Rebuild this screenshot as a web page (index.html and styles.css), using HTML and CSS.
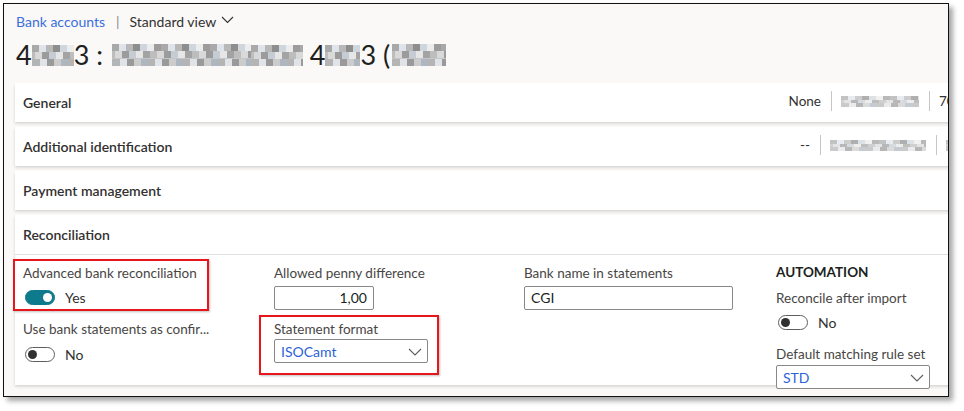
FILE: index.html
```html
<!DOCTYPE html>
<html lang="en">
<head>
<meta charset="utf-8">
<title>Bank accounts</title>
<link rel="stylesheet" href="styles.css">
</head>
<body>
<div class="frame">
  <header class="page-head">
    <nav class="crumbs">
      <a class="crumb-link" href="#">Bank accounts</a>
      <span class="crumb-sep">|</span>
      <span class="view">Standard view
        <svg class="view-chev" width="13" height="8" viewBox="0 0 13 8"><path d="M1 1 L6.5 6.5 L12 1" fill="none" stroke="#323130" stroke-width="1.1"/></svg>
      </span>
    </nav>
    <h1 class="title">4<span class="mosaic m1"></span>3 : <span class="mosaic m2"></span> <span class="mosaic m3"></span> 4<span class="mosaic m4"></span>3 (<span class="mosaic m5"></span></h1>
  </header>

  <section class="tabs">
    <div class="card">
      <div class="card-head">
        <span class="card-title">General</span>
        <span class="summary">
          <span class="sum-text">None</span>
          <span class="sum-sep"></span>
          <span class="mosaic sum-blur b1"></span>
          <span class="sum-sep"></span>
          <span class="sum-text sum-last">70</span>
        </span>
      </div>
    </div>
    <div class="card">
      <div class="card-head">
        <span class="card-title">Additional identification</span>
        <span class="summary">
          <span class="sum-text">--</span>
          <span class="sum-sep"></span>
          <span class="mosaic sum-blur b2"></span>
          <span class="sum-sep"></span>
          <span class="mosaic sum-blur b3"></span>
        </span>
      </div>
    </div>
    <div class="card">
      <div class="card-head">
        <span class="card-title">Payment management</span>
      </div>
    </div>
    <div class="card card-open">
      <div class="card-head">
        <span class="card-title">Reconciliation</span>
      </div>
      <div class="card-body">
        <div class="col">
          <div class="field marked">
            <span class="annot annot-1"></span>
            <div class="label">Advanced bank reconciliation</div>
            <div class="toggle-row first">
              <span class="toggle on"><span class="knob"></span></span>
              <span class="toggle-text">Yes</span>
            </div>
          </div>
          <div class="field">
            <div class="label gap-12">Use bank statements as confir...</div>
            <div class="toggle-row second">
              <span class="toggle"><span class="knob"></span></span>
              <span class="toggle-text">No</span>
            </div>
          </div>
        </div>
        <div class="col">
          <div class="field">
            <div class="label">Allowed penny difference</div>
            <div class="input num">1,00</div>
          </div>
          <div class="field marked">
            <span class="annot annot-2"></span>
            <div class="label gap-10">Statement format</div>
            <div class="select sel-format">
              <span class="sel-value">ISOCamt</span>
              <svg class="sel-chev" width="14" height="8" viewBox="0 0 14 8"><path d="M1 1 L7 7 L13 1" fill="none" stroke="#605e5c" stroke-width="1.1"/></svg>
            </div>
          </div>
        </div>
        <div class="col">
          <div class="field">
            <div class="label">Bank name in statements</div>
            <div class="input text wide">CGI</div>
          </div>
        </div>
        <div class="col">
          <div class="group-title">AUTOMATION</div>
          <div class="label gap-8">Reconcile after import</div>
          <div class="toggle-row third">
            <span class="toggle"><span class="knob"></span></span>
            <span class="toggle-text">No</span>
          </div>
          <div class="label gap-12">Default matching rule set</div>
          <div class="select sel-rule">
            <span class="sel-value">STD</span>
            <svg class="sel-chev" width="14" height="8" viewBox="0 0 14 8"><path d="M1 1 L7 7 L13 1" fill="none" stroke="#605e5c" stroke-width="1.1"/></svg>
          </div>
        </div>
      </div>
    </div>
  </section>
</div>
</body>
</html>
```

FILE: styles.css
```css
html, body {
  margin: 0;
  padding: 0;
  background: #ffffff;
}

body {
  font-family: Lato, "Open Sans", sans-serif;
  color: #323130;
  width: 964px;
  height: 411px;
  overflow: hidden;
}

.frame {
  margin: 3px 0 0 3px;
  width: 946px;
  height: 394px;
  border: 1px solid #111;
  background: #faf9f8;
  box-shadow: 4px 4px 5px rgba(0, 0, 0, 0.35);
  overflow: hidden;
  box-sizing: border-box;
}

.page-head {
  padding: 7px 0 0 12px;
}

.crumbs {
  display: flex;
  align-items: center;
  height: 20px;
  font-size: 14px;
}

.crumb-link {
  color: #3b6fdb;
  text-decoration: none;
}

.crumb-sep {
  color: #8a8886;
  margin: 0 10px 0 11px;
  font-size: 14px;
}

.view {
  display: flex;
  align-items: center;
  color: #323130;
}

.view-chev {
  margin-left: 5px;
  margin-top: -3px;
}

.title {
  margin: 8px 0 0 0;
  font-size: 27px;
  font-weight: 400;
  line-height: 32px;
  height: 32px;
  color: #201f1e;
  display: flex;
  align-items: center;
  white-space: pre;
}

.mosaic {
  display: inline-block;
  background-color: #c4c6c9;
  background-image:
    linear-gradient(90deg, #a9a9a9 0 7px, #dfe4ea 7px 14px, #b8b8b8 14px 21px, #8e8e8e 21px 28px, #cfd6de 28px 35px, #ececec 35px 42px, #9c9c9c 42px 49px),
    linear-gradient(90deg, #d9d9d9 0 7px, #9b9b9b 7px 14px, #c5ccd4 14px 21px, #e6e6e6 21px 28px, #a3a3a3 28px 35px, #bdbdbd 35px 42px),
    linear-gradient(90deg, #b4b4b4 0 7px, #e0e3e7 7px 14px, #9a9a9a 14px 21px, #cccccc 21px 28px, #aeb6bf 28px 35px);
  background-size: 49px 34%, 42px 33%, 35px 33%;
  background-position: 0 0, 3px 50%, 1px 100%;
  background-repeat: repeat-x;
}

.m1 { width: 42px; height: 21px; }
.m2 { width: 139px; height: 22px; margin-left: 2px; }
.m3 { width: 52px; height: 21px; }
.m4 { width: 35px; height: 21px; }
.m5 { width: 54px; height: 22px; margin-left: 2px; }

.tabs {
  margin: 12px 0 0 11px;
  display: flex;
  flex-direction: column;
  gap: 5px;
}

.card {
  width: 994px;
  background: #ffffff;
  box-shadow: 0 1.6px 3px rgba(0, 0, 0, 0.16), 0 0.3px 0.9px rgba(0, 0, 0, 0.11);
}

.card-head {
  height: 39px;
  display: flex;
  align-items: center;
  padding: 0 8px;
}

.card-title {
  font-size: 14px;
  font-weight: 600;
  color: #323130;
  padding-bottom: 1px;
}

.summary {
  margin-left: auto;
  display: flex;
  align-items: center;
  font-size: 13.5px;
  color: #323130;
  padding-bottom: 3px;
}

.sum-sep {
  width: 1px;
  height: 20px;
  background: #c8c6c4;
  margin: 0 9px 0 10px;
}

.sum-blur {
  height: 11px;
  opacity: 0.7;
}

.b1 { width: 78px; }
.b2 { width: 96px; }
.b3 { width: 55px; }

.sum-last {
  width: 62px;
  white-space: nowrap;
}

.card-open {
  flex: 1;
}

.card-open .card-head {
  border-bottom: 1px solid #e1dfdd;
}

.card-body {
  display: grid;
  grid-template-columns: 251px 250px 252px 200px;
  padding: 9px 8px 12px 8px;
  height: 130px;
  box-sizing: border-box;
}

.col {
  display: flex;
  flex-direction: column;
  align-items: flex-start;
}

.field {
  position: relative;
  display: flex;
  flex-direction: column;
  align-items: flex-start;
}

.label {
  font-size: 13.5px;
  line-height: 18px;
  color: #484644;
  white-space: nowrap;
}

.gap-8 { margin-top: 8px; }
.gap-10 { margin-top: 10px; }
.gap-12 { margin-top: 12px; }

.group-title {
  font-size: 13.5px;
  font-weight: 700;
  line-height: 18px;
  color: #201f1e;
  margin-top: -1px;
}

.toggle-row {
  display: flex;
  align-items: center;
  height: 22px;
  margin-left: 2px;
}

.toggle-row.first { margin-top: 4px; }
.toggle-row.second { margin-top: 5px; }
.toggle-row.third { margin-top: 4px; }

.toggle {
  width: 30px;
  height: 15px;
  box-sizing: border-box;
  border-radius: 8px;
  border: 1px solid #605e5c;
  background: #ffffff;
  display: flex;
  align-items: center;
  padding: 0 2px;
}

.knob {
  width: 9px;
  height: 9px;
  border-radius: 50%;
  background: #323130;
}

.toggle.on {
  background: #0e7b8c;
  border-color: #0e7b8c;
  justify-content: flex-end;
}

.toggle.on .knob {
  background: #ffffff;
}

.toggle-text {
  font-size: 14px;
  margin-left: 10px;
  color: #323130;
}

.input {
  margin-top: 4px;
  height: 24px;
  box-sizing: border-box;
  border: 1px solid #8a8886;
  border-radius: 2px;
  font-size: 14px;
  line-height: 22px;
  padding: 0 6px;
  color: #201f1e;
  background: #ffffff;
}

.input.num {
  width: 100px;
  text-align: right;
}

.input.wide {
  width: 209px;
}

.select {
  margin-top: 1px;
  height: 24px;
  width: 154px;
  box-sizing: border-box;
  border: 1px solid #8a8886;
  border-radius: 2px;
  display: flex;
  align-items: center;
  justify-content: space-between;
  padding: 0 5px 0 6px;
  background: #ffffff;
}

.sel-rule {
  margin-top: 2px;
}

.sel-value {
  font-size: 14px;
  color: #2b63d9;
}

.sel-chev {
  margin-top: 1px;
}

.annot {
  position: absolute;
  border: 2px solid #e8161b;
  box-sizing: border-box;
  box-shadow: 1px 1px 2px rgba(0, 0, 0, 0.25);
  pointer-events: none;
}

.annot-1 {
  left: -10px;
  top: -5px;
  width: 196px;
  height: 52px;
}

.annot-2 {
  left: -15px;
  top: 5px;
  width: 180px;
  height: 60px;
}
```
